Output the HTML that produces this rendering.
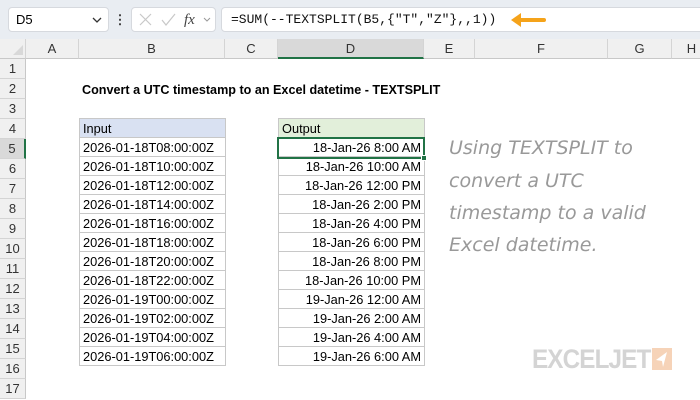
<!DOCTYPE html>
<html><head><meta charset="utf-8"><style>
*{margin:0;padding:0;box-sizing:border-box}
body{width:700px;height:400px;overflow:hidden;background:#fff;font-family:"Liberation Sans",sans-serif;position:relative}
.a{position:absolute}
.top{left:0;top:0;width:700px;height:39px;background:#e9edf2}
.box{background:#fff;border:1px solid #d6d9de;border-radius:4px}
.ch{top:39px;height:20px;background:#f0f0f0;border-right:1px solid #d4d4d4;border-bottom:1px solid #c8c8c8;font-size:13px;color:#333;text-align:center;line-height:20px}
.rh{left:0;width:26px;height:20px;background:#f0f0f0;border-bottom:1px solid #d4d4d4;border-right:1px solid #c8c8c8;font-size:13px;color:#333;text-align:center;line-height:20px}
.c{height:20px;font-size:12.8px;line-height:20px;color:#000;border:1px solid #c8c8c8;margin:-1px 0 0 -1px;padding:0 3px;white-space:nowrap}
.r{text-align:right}
.note{left:449px;font-family:"DejaVu Sans",sans-serif;font-size:19px;color:#999;font-style:italic;letter-spacing:0px;font-weight:300}
</style></head><body>
<div class="a top"></div>
<div class="a box" style="left:8px;top:7px;width:101px;height:25px;font-size:13px;line-height:23px;padding-left:7px">D5</div>
<svg class="a" style="left:91px;top:16px" width="12" height="8"><path d="M2 2l4 4 4-4" fill="none" stroke="#333" stroke-width="1.3"/></svg>
<div class="a" style="left:119px;top:13px;width:2px;height:13px;background:radial-gradient(circle,#444 1px,transparent 1.2px) 0 0/2px 4.5px"></div>
<div class="a box" style="left:131px;top:7px;width:85px;height:25px"></div>
<svg class="a" style="left:138px;top:12px" width="80" height="16"><path d="M2 2l11 11M13 2L2 13" stroke="#c8c8c8" stroke-width="1.2"/><path d="M24 8l4 5 9-11" fill="none" stroke="#c8c8c8" stroke-width="1.2"/><text x="46" y="12" font-family="Liberation Serif" font-style="italic" font-size="15" fill="#444">fx</text><path d="M66 6l3 3 3-3" fill="none" stroke="#999" stroke-width="1"/></svg>
<div class="a box" style="left:221px;top:7px;width:486px;height:25px;font-family:'Liberation Mono',monospace;font-size:13px;line-height:23px;padding-left:9px;color:#111">=SUM(--TEXTSPLIT(B5,{"T","Z"},,1))</div>
<svg class="a" style="left:510px;top:12px" width="36" height="16"><path d="M34 8H8" stroke="#f5a31a" stroke-width="4" stroke-linecap="round"/><path d="M1 8l10-7v14z" fill="#f5a31a"/></svg>

<div class="a ch" style="left:0;width:26px;background:#f0f0f0"></div>
<svg class="a" style="left:12px;top:44px" width="12" height="12"><path d="M11 1V11H1z" fill="#d8d8d8"/></svg>
<div class="a ch" style="left:26px;width:53px">A</div>
<div class="a ch" style="left:79px;width:146px">B</div>
<div class="a ch" style="left:225px;width:53px">C</div>
<div class="a ch" style="left:278px;width:146px;background:#d9d9d9;border-bottom:2px solid #217346">D</div>
<div class="a ch" style="left:424px;width:51px">E</div>
<div class="a ch" style="left:475px;width:133px">F</div>
<div class="a ch" style="left:608px;width:64px">G</div>
<div class="a ch" style="left:672px;width:40px">H</div>

<div class="a rh" style="top:59px">1</div>
<div class="a rh" style="top:79px">2</div>
<div class="a rh" style="top:99px">3</div>
<div class="a rh" style="top:119px">4</div>
<div class="a rh" style="top:139px;background:#d9d9d9;border-right:2px solid #217346">5</div>
<div class="a rh" style="top:159px">6</div>
<div class="a rh" style="top:179px">7</div>
<div class="a rh" style="top:199px">8</div>
<div class="a rh" style="top:219px">9</div>
<div class="a rh" style="top:239px">10</div>
<div class="a rh" style="top:259px">11</div>
<div class="a rh" style="top:279px">12</div>
<div class="a rh" style="top:299px">13</div>
<div class="a rh" style="top:319px">14</div>
<div class="a rh" style="top:339px">15</div>
<div class="a rh" style="top:359px">16</div>
<div class="a rh" style="top:379px">17</div>

<div class="a" style="left:82px;top:80px;font-size:12.6px;font-weight:bold;line-height:20px">Convert a UTC timestamp to an Excel datetime - TEXTSPLIT</div>

<div class="a" style="left:80px;top:119px;width:146px">
<div class="c" style="background:#d9e1f2">Input</div>
<div class="c">2026-01-18T08:00:00Z</div>
<div class="c">2026-01-18T10:00:00Z</div>
<div class="c">2026-01-18T12:00:00Z</div>
<div class="c">2026-01-18T14:00:00Z</div>
<div class="c">2026-01-18T16:00:00Z</div>
<div class="c">2026-01-18T18:00:00Z</div>
<div class="c">2026-01-18T20:00:00Z</div>
<div class="c">2026-01-18T22:00:00Z</div>
<div class="c">2026-01-19T00:00:00Z</div>
<div class="c">2026-01-19T02:00:00Z</div>
<div class="c">2026-01-19T04:00:00Z</div>
<div class="c">2026-01-19T06:00:00Z</div>
</div>
<div class="a" style="left:279px;top:119px;width:146px">
<div class="c" style="background:#e2efda">Output</div>
<div class="c r">18-Jan-26 8:00 AM</div>
<div class="c r">18-Jan-26 10:00 AM</div>
<div class="c r">18-Jan-26 12:00 PM</div>
<div class="c r">18-Jan-26 2:00 PM</div>
<div class="c r">18-Jan-26 4:00 PM</div>
<div class="c r">18-Jan-26 6:00 PM</div>
<div class="c r">18-Jan-26 8:00 PM</div>
<div class="c r">18-Jan-26 10:00 PM</div>
<div class="c r">19-Jan-26 12:00 AM</div>
<div class="c r">19-Jan-26 2:00 AM</div>
<div class="c r">19-Jan-26 4:00 AM</div>
<div class="c r">19-Jan-26 6:00 AM</div>
</div>
<div class="a" style="left:277px;top:137px;width:148px;height:22px;border:2px solid #217346"></div>
<div class="a" style="left:421px;top:155px;width:6px;height:6px;background:#217346;border:1px solid #fff"></div>

<div class="a note" style="top:137px">Using TEXTSPLIT to</div>
<div class="a note" style="top:170px">convert a UTC</div>
<div class="a note" style="top:202px">timestamp to a valid</div>
<div class="a note" style="top:234px">Excel datetime.</div>

<div class="a" style="left:532px;top:344px;font-size:27px;font-weight:bold;color:#d4d4d4;letter-spacing:-1px;line-height:30px;transform:scaleX(0.9);transform-origin:left">EXCELJET</div>
<svg class="a" style="left:652px;top:348px" width="20" height="22"><rect width="20" height="22" fill="#f6d3b8"/><path d="M15 4L4 12l6 1 1 6z" fill="#fff"/></svg>
</body></html>
